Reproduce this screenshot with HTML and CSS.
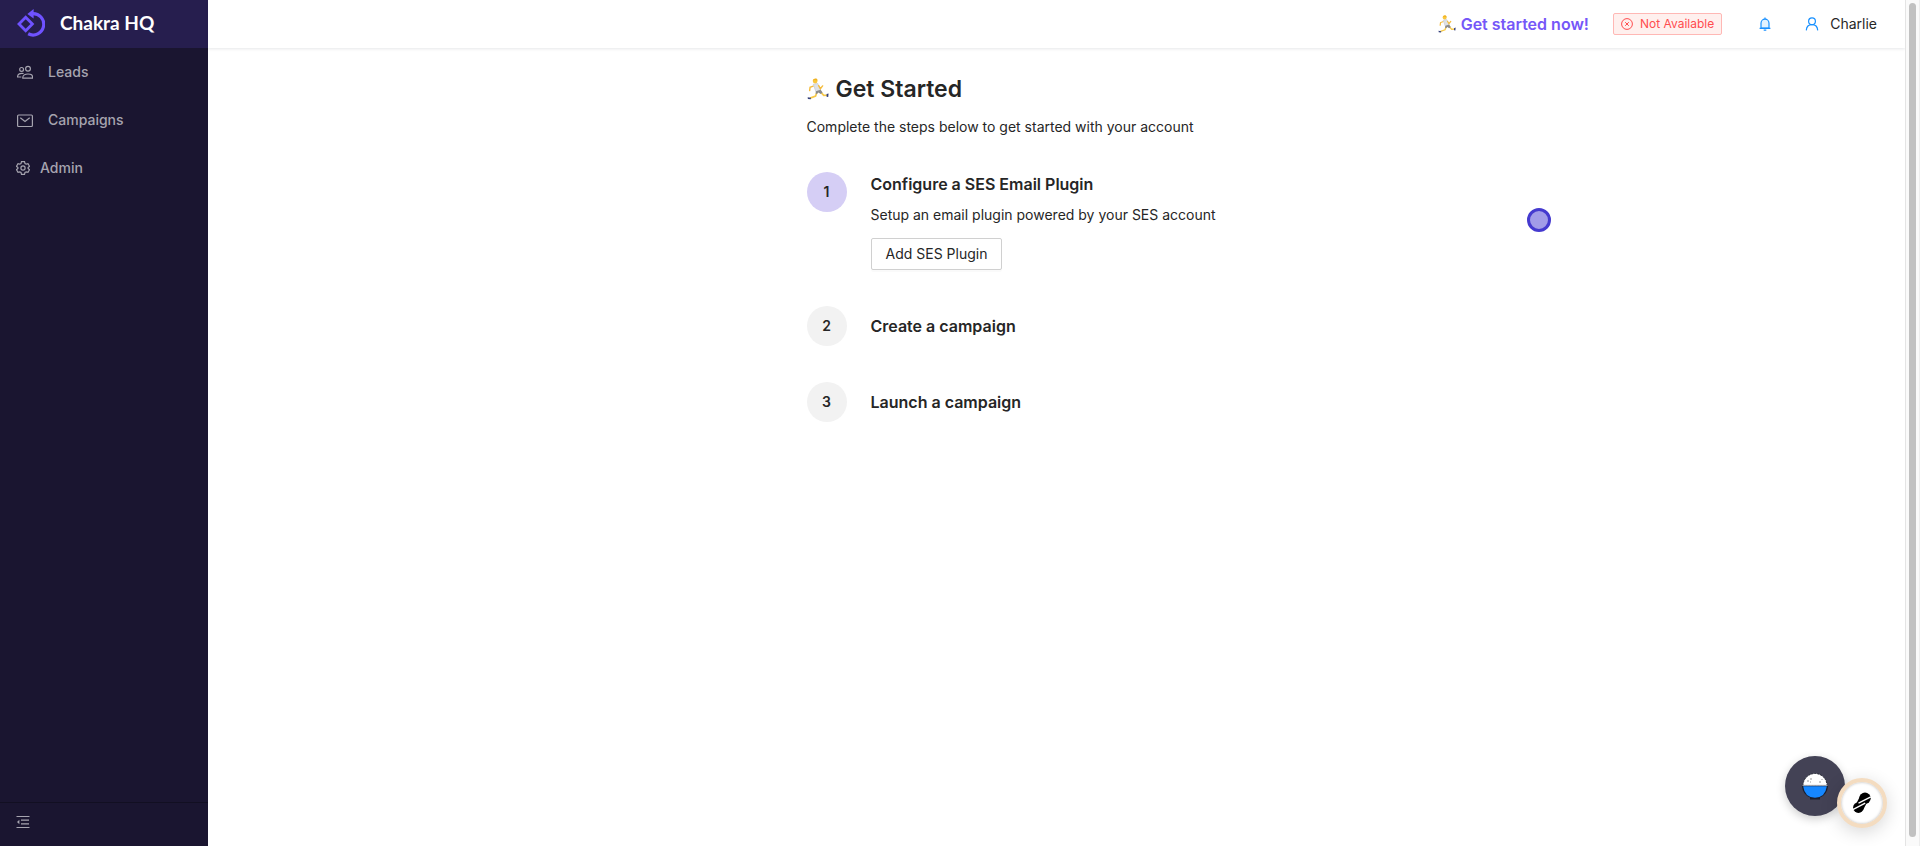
FILE: index.html
```html
<!DOCTYPE html>
<html lang="en">
<head>
<meta charset="utf-8">
<title>Chakra HQ</title>
<link rel="stylesheet" href="styles.css">
</head>
<body>
<svg class="defs" aria-hidden="true">
  <symbol id="runner" viewBox="0 0 20 20">
    <path d="M6.2 7.2 2.8 8.4 2.4 11.4" fill="none" stroke="#f5bc3c" stroke-width="1.3" stroke-linecap="round"/>
    <path d="M12.3 12.6 15.2 15.8 18.4 15.7" fill="none" stroke="#f7c948" stroke-width="1.5"/>
    <path d="M9 13 7.8 16.4 2.8 18.3" fill="none" stroke="#f7c948" stroke-width="1.5"/>
    <path d="M5.8 5.8 9.6 5 12.3 10.8 8.2 12.6Z" fill="#dfe1e5" stroke="#d2d5da" stroke-width="1" stroke-linejoin="round"/>
    <path d="M10.6 7 12.2 9.7 14.2 7.2" fill="none" stroke="#f5bc3c" stroke-width="1.3" stroke-linecap="round"/>
    <path d="M8.2 12 12.4 10.6 14.2 13.2 12.4 14.6 10.4 13.2 9 14.6 7.8 14Z" fill="#8b8b8b"/>
    <circle cx="7.4" cy="2.8" r="2.2" fill="#f9c63c"/>
    <path d="M5.2 2.3Q6.2 0 8.6.5 10 1.3 9.3 2.5 7.2 1.4 5.2 2.3Z" fill="#efb323"/>
    <path d="M.6 17.5 3.6 18 3.4 19.4.8 19.2ZM17.8 14.6 19.6 14 19.3 17.3 17.8 17Z" fill="#34407c"/>
  </symbol>
</svg>
<div class="app">
  <aside class="sidebar">
    <a class="brand" href="#">
      <svg class="brand-logo" viewBox="0 0 28 28" aria-hidden="true">
        <path d="M8.7 8.2 15.4 15 8.7 21.8 2 15Z" fill="none" stroke="#6f52ff" stroke-width="2.8"/>
        <path d="M15 4.6A10.7 10.7 0 1 1 11.2 24.8" fill="none" stroke="#6f52ff" stroke-width="3.2"/>
        <path d="M16.6 0V9.6L10.4 5Z" fill="#6f52ff"/>
      </svg>
      <span>Chakra HQ</span>
    </a>
    <nav class="menu">
      <a class="menu-item" href="#">
        <svg class="icon-lead" viewBox="0 0 16 16" aria-hidden="true">
          <circle cx="4.6" cy="5.4" r="1.9"/><circle cx="11" cy="4.8" r="2.4"/>
          <path d="M5.8 14.2V13.3Q6.2 10 11 10T15.5 13.3V14.2ZM6.6 9.5Q.9 8.8.6 12.3V13H4.3"/>
        </svg>
        <span>Leads</span>
      </a>
      <a class="menu-item" href="#">
        <svg class="icon-lead" viewBox="0 0 16 16" aria-hidden="true">
          <rect x=".6" y="3" width="14.8" height="11.5" rx="1"/>
          <path d="M3.3 5.7 8 9.5 12.7 5.7"/>
        </svg>
        <span>Campaigns</span>
      </a>
      <a class="menu-item menu-item-group" href="#">
        <svg class="icon-small" viewBox="0 0 14 14" aria-hidden="true">
          <path d="M5.5.7H8.5L9 2.5 10.2 3.2 12 2.7 13.5 5.3 12.1 6.5V7.5L13.5 8.7 12 11.3 10.2 10.8 9 11.5 8.5 13.3H5.5L5 11.5 3.8 10.8 2 11.3.5 8.7 1.9 7.5V6.5L.5 5.3 2 2.7 3.8 3.2 5 2.5Z"/>
          <circle cx="7" cy="7" r="2.1"/>
        </svg>
        <span>Admin</span>
      </a>
    </nav>
    <button class="collapse" type="button" aria-label="Collapse menu">
      <svg class="icon-small" viewBox="0 0 14 14" aria-hidden="true">
        <path d="M.5 1.5H13.5M5 5.2H13M5 8.8H13M.5 12.5H13.5"/>
        <path d="M3.4 4.8 1 7 3.4 9.2Z" fill="currentColor" stroke="none"/>
      </svg>
    </button>
  </aside>
  <div class="main">
    <header class="topbar">
      <a class="start-link" href="#"><svg class="runner-small" aria-hidden="true"><use href="#runner"/></svg>Get started now!</a>
      <span class="tag">
        <svg viewBox="0 0 12 12" aria-hidden="true"><circle cx="6" cy="6" r="5.4"/><path d="M4.2 4.2 7.8 7.8M7.8 4.2 4.2 7.8"/></svg>
        Not Available
      </span>
      <button class="bell" type="button" aria-label="Notifications">
        <svg viewBox="0 0 14 14" aria-hidden="true">
          <path d="M3 11.2V6.2A4 4 0 0 1 11 6.2V11.2Z" fill="#e2f2ff"/>
          <path d="M1.6 11.3H12.4M7 .5V2M5.7 13.2H8.3"/>
        </svg>
      </button>
      <button class="user" type="button">
        <svg viewBox="0 0 14 14" aria-hidden="true"><circle cx="7" cy="4.3" r="3.4"/><path d="M1.3 13.4C1.5 9.8 3.8 7.7 7 7.7S12.5 9.8 12.7 13.4"/></svg>
        Charlie
      </button>
    </header>
    <main class="content">
      <h1><svg class="runner-large" aria-hidden="true"><use href="#runner"/></svg>Get Started</h1>
      <p class="intro">Complete the steps below to get started with your account</p>
      <ol class="steps">
        <li class="step">
          <span class="number number-active">1</span>
          <div class="step-body">
            <h2>Configure a SES Email Plugin</h2>
            <p>Setup an email plugin powered by your SES account</p>
            <button class="action" type="button">Add SES Plugin</button>
          </div>
        </li>
        <li class="step step-closed"><span class="number">2</span><h2>Create a campaign</h2></li>
        <li class="step step-closed"><span class="number">3</span><h2>Launch a campaign</h2></li>
      </ol>
    </main>
  </div>
  <div class="scroll-track" aria-hidden="true"><div class="scroll-thumb"></div></div>
</div>
<span class="pointer" aria-hidden="true"></span>
<button class="fab fab-bowl" type="button" aria-label="Open help">
  <svg viewBox="0 0 28 28" aria-hidden="true">
    <path d="M2 13.5A12 12 0 0 1 26 13.5Z" fill="#fff" stroke="#222530" stroke-width="1" stroke-dasharray="2 1"/>
    <path d="M.8 13.5H27.2Q26.4 22.4 19 25.6V27.4H9V25.6Q1.6 22.4.8 13.5Z" fill="#1b1e2c"/>
    <path d="M2.2 14.3H25.8Q24.4 25.5 14 25.8 3.6 25.5 2.2 14.3Z" fill="#1687ff"/>
    <path d="M1.5 13.3H26.5" stroke="#b9bcc4"/>
    <path d="M7 8V10M9 7H11M9 10H10M19 9V11M21 7V8" stroke="#999"/>
  </svg>
</button>
<button class="fab fab-chat" type="button" aria-label="Open assistant">
  <svg viewBox="0 0 20 22" aria-hidden="true">
    <path d="M12.4 5.6 7.2 15.8" stroke="#000" stroke-width="9"/>
    <circle cx="13" cy="6.2" r="5.7"/><circle cx="6.4" cy="15.6" r="5.3"/>
    <path d="M6.5 11.1 18.8 4.8M.8 17.6 13.2 11.2" stroke="#fff" stroke-width="1.3"/>
  </svg>
</button>
</body>
</html>
```

FILE: styles.css
```css
* { box-sizing: border-box; }
body {
  margin: 0;
  background: #fff;
  color: #262626;
  font: 14px/22px Inter, "Liberation Sans", sans-serif;
}
h1, h2, p, ol { margin: 0; padding: 0; }
a { text-decoration: none; }
button { font: inherit; color: inherit; padding: 0; border: 0; background: none; }
svg { flex: none; fill: none; stroke: currentColor; }
.defs { display: none; }
.app { display: flex; min-height: 100vh; }

.sidebar {
  flex: none;
  display: flex;
  flex-direction: column;
  width: 208px;
  background: #1a1530;
  color: #a6a4af;
}
.brand {
  display: flex;
  align-items: center;
  gap: 15px;
  height: 48px;
  padding: 0 0 2px 17px;
  background: #261e4e;
  color: #fff;
  font: 700 19px/24px Lato, sans-serif;
}
.brand-logo { width: 28px; height: 28px; stroke: none; }
.menu { flex: 1; }
.menu-item {
  display: flex;
  align-items: center;
  gap: 15px;
  height: 48px;
  padding-left: 17px;
  color: inherit;
  font-weight: 500;
}
.menu-item-group { gap: 10px; padding-left: 16px; }
.icon-lead { width: 16px; height: 16px; stroke-width: 1.2; }
.icon-small { width: 14px; height: 14px; stroke-width: 1.2; }
.collapse {
  display: flex;
  align-items: center;
  height: 44px;
  padding: 0 16px 6px;
  border-top: 1px solid #120f22;
}

.main { flex: 1; min-width: 0; }
.topbar {
  display: flex;
  align-items: center;
  justify-content: flex-end;
  height: 48px;
  padding-right: 28px;
  box-shadow: 0 1px 3px rgba(0, 21, 41, .1);
}
.start-link {
  display: flex;
  align-items: center;
  gap: 5px;
  margin-right: 24px;
  color: #7557f8;
  font-size: 16px;
  font-weight: 600;
}
.runner-small { width: 18px; height: 18px; }
.runner-small, .runner-large { stroke: none; }
.tag {
  display: flex;
  align-items: center;
  gap: 7px;
  height: 22px;
  margin-right: 36px;
  padding: 0 7px;
  border: 1px solid #ffb8b5;
  border-radius: 2px;
  background: #fff0ee;
  color: #ff4d4f;
  font-size: 12px;
}
.tag svg { width: 12px; height: 12px; }
.bell { display: flex; margin-right: 33px; color: #1890ff; }
.bell svg, .user svg { width: 14px; height: 14px; stroke-width: 1.2; }
.user { display: flex; align-items: center; gap: 11px; }
.user svg { color: #1890ff; }

.content { width: 100%; max-width: 500px; margin: 0 auto; padding-top: 25px; }
h1 {
  display: flex;
  align-items: center;
  gap: 7px;
  font-size: 23px;
  line-height: 32px;
  font-weight: 600;
}
.runner-large { width: 22px; height: 22px; }
.intro { margin-top: 11px; }
.steps {
  display: flex;
  flex-direction: column;
  gap: 36px;
  margin-top: 34px;
  list-style: none;
}
.step { display: flex; align-items: flex-start; gap: 24px; }
.step-closed { align-items: center; }
.number {
  flex: none;
  display: grid;
  place-items: center;
  width: 40px;
  height: 40px;
  border-radius: 50%;
  background: #f2f2f2;
  font-weight: 600;
}
.number-active { background: #d5cef5; }
h2 { font-size: 16px; line-height: 24px; font-weight: 600; }
.step-body p { margin-top: 8px; }
.action {
  height: 32px;
  margin-top: 12px;
  padding: 0 14px;
  border: 1px solid #d0d0d0;
  border-radius: 2px;
  background: #fff;
  box-shadow: 0 2px 0 rgba(0, 0, 0, .02);
  display: block;
}

.scroll-track {
  flex: none;
  width: 15px;
  padding: 3px 3px 9px;
  border-left: 1px solid #e4e4e4;
  border-right: 1px solid #ededed;
  background: #fafafa;
  display: flex;
}
.scroll-thumb { flex: 1; border-radius: 4px; background: #c1c1c1; }

.pointer {
  position: absolute;
  top: 208px;
  right: 369px;
  width: 24px;
  height: 24px;
  border: 3px solid #453acf;
  border-radius: 50%;
  background: #a29ce8;
}
.fab {
  position: fixed;
  display: grid;
  place-items: center;
  border-radius: 50%;
}
.fab svg { stroke: none; }
.fab-bowl {
  right: 75px;
  bottom: 30px;
  width: 60px;
  height: 60px;
  background: #434255;
  box-shadow: 0 3px 10px rgba(0, 0, 0, .2);
}
.fab-bowl svg { width: 28px; height: 28px; }
.fab-chat {
  right: 33px;
  bottom: 18px;
  width: 50px;
  height: 50px;
  border: 4px solid #f4dcc0;
  background: #fff;
  box-shadow: 0 4px 18px rgba(0, 0, 0, .16), inset 0 0 3px rgba(0, 0, 0, .3);
}
.fab-chat svg { width: 20px; height: 22px; fill: #000; }
```
